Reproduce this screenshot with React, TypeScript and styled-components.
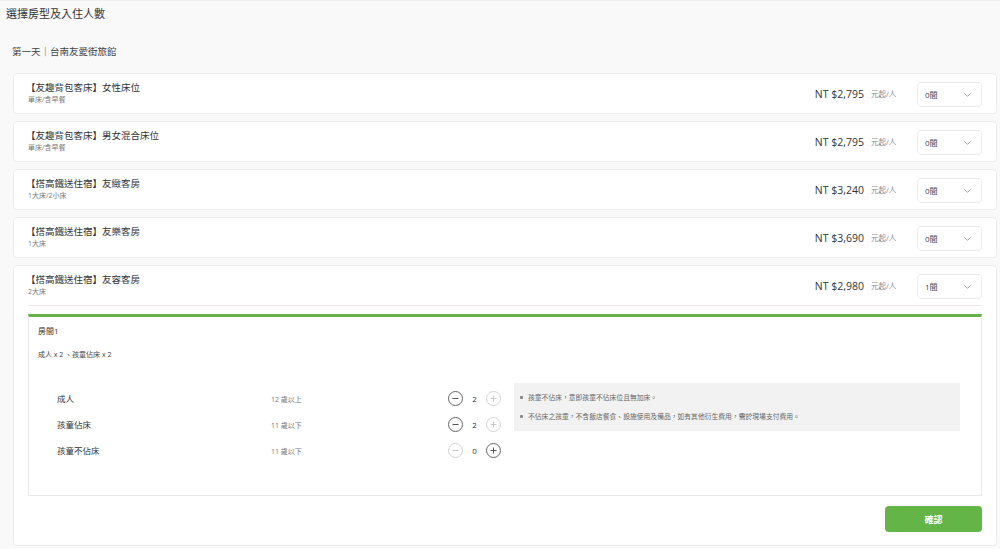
import React from "react";
import styled, { createGlobalStyle } from "styled-components";

const Global = createGlobalStyle`
  html, body { margin: 0; padding: 0; background: #f9f9f9; }
  body { font-family: "Open Sans", "Noto Sans CJK TC", sans-serif; color: #333; }
  * { box-sizing: border-box; }
`;

const Page = styled.div`
  width: 1000px;
  height: 549px;
  overflow: hidden;
  border-top: 1px solid #f0f0f0;
  padding: 0 3px 0 13px;
`;

const Title = styled.h1`
  margin: 0 0 0 -7px;
  font-size: 11px;
  font-weight: 400;
  line-height: 26px;
  color: #333;
`;

const DayLabel = styled.div`
  margin: 12px 0 0 -1px;
  font-size: 9.5px;
  line-height: 26px;
  color: #444;
`;

const List = styled.div`
  margin-top: 8px;
  display: flex;
  flex-direction: column;
  gap: 7px;
`;

const Card = styled.div`
  background: #fff;
  border: 1px solid #ececec;
  border-radius: 4px;
  padding: 0 14px 0 14px;
`;

const Header = styled.div`
  height: 39px;
  display: flex;
  align-items: center;
`;

const Info = styled.div`
  flex: 1;
  display: flex;
  flex-direction: column;
`;

const RoomName = styled.div`
  font-size: 9.5px;
  line-height: 13px;
  color: #333;
  margin-left: -2px;
`;

const RoomDesc = styled.div`
  font-size: 7px;
  line-height: 12px;
  color: #777;
`;

const Price = styled.div`
  font-size: 10.5px;
  color: #333;
  margin-right: 7px;
`;

const Unit = styled.div`
  font-size: 7.5px;
  color: #888;
  width: 46px;
`;

const Select = styled.div`
  width: 65px;
  height: 25px;
  border: 1px solid #ececec;
  border-radius: 4px;
  display: flex;
  align-items: center;
  justify-content: space-between;
  padding: 0 9px 0 7px;
  font-size: 8px;
  color: #444;
  margin-top: 2px;
`;

const Divider = styled.div`
  height: 1px;
  background: #f2e8e8;
`;

const RoomBox = styled.div`
  margin-top: 8px;
  border: 1px solid #e8e8e8;
  border-top: 3px solid #6ab04c;
  height: 182px;
  padding: 0 21px 0 9px;
`;

const RoomTitle = styled.div`
  margin-top: 7px;
  font-size: 8px;
  line-height: 14px;
  color: #333;
`;

const Summary = styled.div`
  margin-top: 11px;
  font-size: 7px;
  line-height: 12px;
  color: #444;
`;

const Body = styled.div`
  margin-top: 24px;
  display: flex;
  align-items: flex-start;
`;

const Table = styled.div`
  width: 476px;
  padding-left: 19px;
  display: flex;
  flex-direction: column;
`;

const Row = styled.div`
  height: 26px;
  display: grid;
  grid-template-columns: 214px 177px auto;
  align-items: center;
`;

const Label = styled.div`
  font-size: 8.5px;
  color: #333;
`;

const Age = styled.div`
  font-size: 7px;
  color: #777;
  padding-top: 2px;
`;

const Stepper = styled.div`
  display: flex;
  align-items: center;
`;

const Circle = styled.div<{ $off?: boolean }>`
  width: 15px;
  height: 15px;
  border-radius: 50%;
  border: 1px solid ${(p) => (p.$off ? "#d4d4d4" : "#666")};
  color: ${(p) => (p.$off ? "#c8c8c8" : "#555")};
  display: flex;
  align-items: center;
  justify-content: center;
`;

const Count = styled.div`
  width: 23px;
  text-align: center;
  font-size: 8px;
  color: #333;
`;

const Note = styled.ul`
  flex: 1;
  margin: -2px 0 0 0;
  padding: 5px 0 5px 6px;
  background: #f2f2f2;
  list-style: none;
`;

const NoteItem = styled.li`
  position: relative;
  font-size: 6.8px;
  line-height: 19px;
  color: #666;
  padding-left: 8px;
  &::before {
    content: "";
    position: absolute;
    left: 0;
    top: 8px;
    width: 3px;
    height: 3px;
    background: #888;
    border-radius: 1px;
  }
`;

const Footer = styled.div`
  display: flex;
  justify-content: flex-end;
  padding: 10px 0 13px;
`;

const Confirm = styled.button`
  width: 97px;
  height: 26px;
  border: none;
  border-radius: 4px;
  background: #63b547;
  color: #fff;
  font-family: "Noto Sans CJK TC", sans-serif;
  font-size: 9px;
  font-weight: 700;
`;

const Chevron = () => (
  <svg width="9" height="6" viewBox="0 0 9 6">
    <path d="M1.5 1.5 L4.5 4.3 L7.5 1.5" fill="none" stroke="#aaa" strokeWidth="1" />
  </svg>
);

const Minus = () => (
  <svg width="9" height="9" viewBox="0 0 9 9">
    <path d="M1.5 4.5 H7.5" stroke="currentColor" strokeWidth="1" />
  </svg>
);

const Plus = () => (
  <svg width="9" height="9" viewBox="0 0 9 9">
    <path d="M1.5 4.5 H7.5 M4.5 1.5 V7.5" stroke="currentColor" strokeWidth="1" />
  </svg>
);

const rooms = [
  { name: "【友趣背包客床】女性床位", desc: "單床/含早餐", price: "NT $2,795", qty: "0間" },
  { name: "【友趣背包客床】男女混合床位", desc: "單床/含早餐", price: "NT $2,795", qty: "0間" },
  { name: "【搭高鐵送住宿】友緻客房", desc: "1大床/2小床", price: "NT $3,240", qty: "0間" },
  { name: "【搭高鐵送住宿】友樂客房", desc: "1大床", price: "NT $3,690", qty: "0間" },
];

const guests = [
  { label: "成人", age: "12 歲以上", n: 2, minusOff: false, plusOff: true },
  { label: "孩童佔床", age: "11 歲以下", n: 2, minusOff: false, plusOff: true },
  { label: "孩童不佔床", age: "11 歲以下", n: 0, minusOff: true, plusOff: false },
];

const RoomHeader = ({ name, desc, price, qty }: { name: string; desc: string; price: string; qty: string }) => (
  <Header>
    <Info>
      <RoomName>{name}</RoomName>
      <RoomDesc>{desc}</RoomDesc>
    </Info>
    <Price>{price}</Price>
    <Unit>元起/人</Unit>
    <Select>
      <span>{qty}</span>
      <Chevron />
    </Select>
  </Header>
);

export default function App() {
  return (
    <>
      <Global />
      <Page>
        <Title>選擇房型及入住人數</Title>
        <DayLabel>第一天｜台南友愛街旅館</DayLabel>
        <List>
          {rooms.map((r) => (
            <Card key={r.name}>
              <RoomHeader {...r} />
            </Card>
          ))}
          <Card>
            <RoomHeader name="【搭高鐵送住宿】友容客房" desc="2大床" price="NT $2,980" qty="1間" />
            <Divider />
            <RoomBox>
              <RoomTitle>房間1</RoomTitle>
              <Summary>成人 x 2 、孩童佔床 x 2</Summary>
              <Body>
                <Table>
                  {guests.map((g) => (
                    <Row key={g.label}>
                      <Label>{g.label}</Label>
                      <Age>{g.age}</Age>
                      <Stepper>
                        <Circle $off={g.minusOff}>
                          <Minus />
                        </Circle>
                        <Count>{g.n}</Count>
                        <Circle $off={g.plusOff}>
                          <Plus />
                        </Circle>
                      </Stepper>
                    </Row>
                  ))}
                </Table>
                <Note>
                  <NoteItem>孩童不佔床，意即孩童不佔床位且無加床。</NoteItem>
                  <NoteItem>不佔床之孩童，不含飯店餐食、設施使用及備品，如有其他衍生費用，需於現場支付費用。</NoteItem>
                </Note>
              </Body>
            </RoomBox>
            <Footer>
              <Confirm>確認</Confirm>
            </Footer>
          </Card>
        </List>
      </Page>
    </>
  );
}
